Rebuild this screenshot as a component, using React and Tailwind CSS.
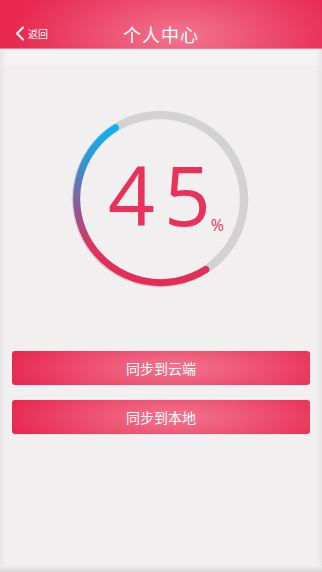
import React from "react";

export default function App() {
  const cjk = { fontFamily: '"Noto Sans CJK SC", "Noto Sans", sans-serif' };
  return (
    <div className="w-[322px] h-[572px] overflow-hidden bg-[#f1eff0] flex flex-col relative" style={cjk}>
      <div className="h-[49px] shrink-0 pt-[18px] flex items-center relative bg-[radial-gradient(ellipse_170px_70px_at_56%_75%,#f27590,#ec4669_60%,#e8284f)] border-b border-[#f47a92]">
        <div className="absolute left-[15px] top-[26px] flex items-center gap-[3px] text-white">
          <svg width="10" height="15" viewBox="0 0 10 15">
            <path d="M8 1.5 L2 7.5 L8 13.5" fill="none" stroke="white" strokeWidth="2" strokeLinecap="round" strokeLinejoin="round" />
          </svg>
          <span className="text-[10px] leading-none">返回</span>
        </div>
        <div className="flex-1 text-center text-white text-[18px] leading-none tracking-[1px] pt-[1px]">个人中心</div>
      </div>
      <div className="h-[16px] bg-[#f4f3f3] shrink-0" />
      <div className="flex justify-center mt-[44px]">
        <div className="relative w-[180px] h-[180px] ml-[-2px]">
          <svg width="180" height="180" viewBox="0 0 180 180">
            <defs>
              <linearGradient id="g" x1="0" y1="0" x2="0" y2="1">
                <stop offset="0" stopColor="#0fb0f2" />
                <stop offset="0.2" stopColor="#2d9ad8" />
                <stop offset="0.5" stopColor="#8a5a98" />
                <stop offset="0.78" stopColor="#df3160" />
                <stop offset="1" stopColor="#e62c55" />
              </linearGradient>
            </defs>
            <circle cx="90" cy="90" r="84" fill="none" stroke="#bdbdbd" strokeWidth="8.5" opacity="0.5" />
            <circle cx="90" cy="90" r="84" fill="none" stroke="#d3d2d2" strokeWidth="7" />
            <path d="M135.8 160.5 A84 84 0 1 1 45.5 18.8" fill="none" stroke="url(#g)" strokeWidth="7" strokeLinecap="round" />
          </svg>
          <div className="absolute left-[38px] top-[44px] flex items-end text-[#e8325a]" style={{ fontFamily: '"Open Sans", "Noto Sans", sans-serif' }}>
            <span className="text-[82px] font-normal leading-[82px]">4</span>
            <span className="text-[82px] font-normal leading-[82px] ml-[9px]">5</span>
            <span className="text-[16px] font-normal leading-none mb-[2px]">%</span>
          </div>
        </div>
      </div>
      <div className="flex flex-col gap-[15px] px-[12px] mt-[62px]">
        <button className="h-[34px] rounded-[3px] text-white text-[14px] bg-[radial-gradient(ellipse_170px_40px_at_55%_50%,#f27590,#ec4669_65%,#e8294f)]" style={cjk}>同步到云端</button>
        <button className="h-[34px] rounded-[3px] text-white text-[14px] bg-[radial-gradient(ellipse_170px_40px_at_55%_50%,#f27590,#ec4669_65%,#e8294f)]" style={cjk}>同步到本地</button>
      </div>
      <div className="absolute left-0 top-[49px] bottom-0 w-[6px] bg-gradient-to-r from-[#e7e5e6] to-transparent" />
      <div className="absolute right-0 top-[49px] bottom-0 w-[6px] bg-gradient-to-l from-[#e7e5e6] to-transparent" />
      <div className="absolute left-0 right-0 bottom-0 h-[6px] bg-gradient-to-t from-[#d6d5d5] to-[#efeded]" />
    </div>
  );
}
